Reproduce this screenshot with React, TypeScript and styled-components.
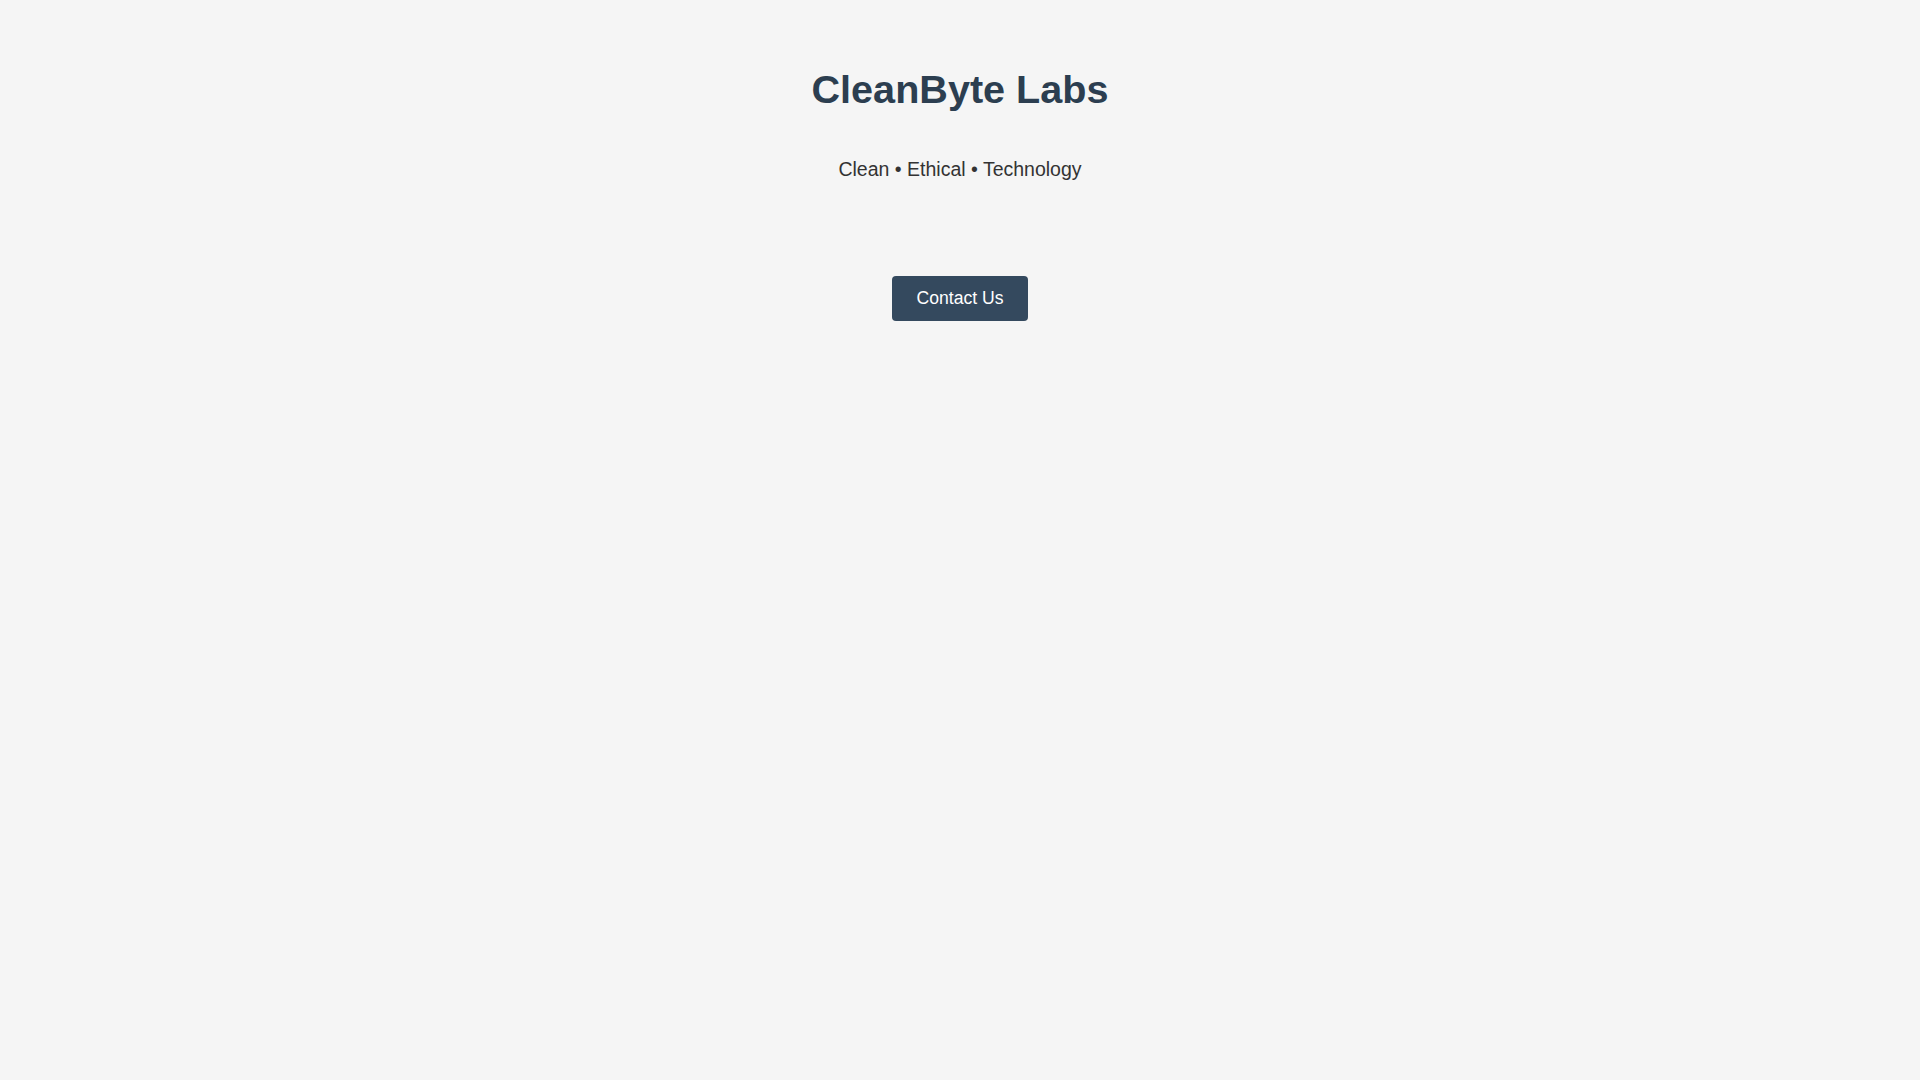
import styled, { createGlobalStyle } from 'styled-components'

const GlobalStyle = createGlobalStyle`
  html, body {
    margin: 0;
    padding: 0;
    background-color: #f5f5f5;
    font-family: "Liberation Sans", Arial, sans-serif;
  }
`

const Page = styled.main`
  min-height: 100vh;
  display: flex;
  flex-direction: column;
  align-items: center;
  padding-top: 67px;
  box-sizing: border-box;
`

const Title = styled.h1`
  margin: 0;
  font-size: 39.6px;
  font-weight: 700;
  color: #2c3e50;
`

const Tagline = styled.p`
  margin: 46px 0 0;
  font-size: 19.5px;
  color: #333;
`

const ContactButton = styled.button`
  margin-top: 95px;
  padding: 12px 24px;
  border: none;
  border-radius: 4px;
  background-color: #34495e;
  color: #fff;
  font-family: inherit;
  font-size: 17.6px;
  cursor: pointer;
`

export default function App(): JSX.Element {
  return (
    <>
      <GlobalStyle />
      <Page>
        <Title>CleanByte Labs</Title>
        <Tagline>Clean • Ethical • Technology</Tagline>
        <ContactButton>Contact Us</ContactButton>
      </Page>
    </>
  )
}
